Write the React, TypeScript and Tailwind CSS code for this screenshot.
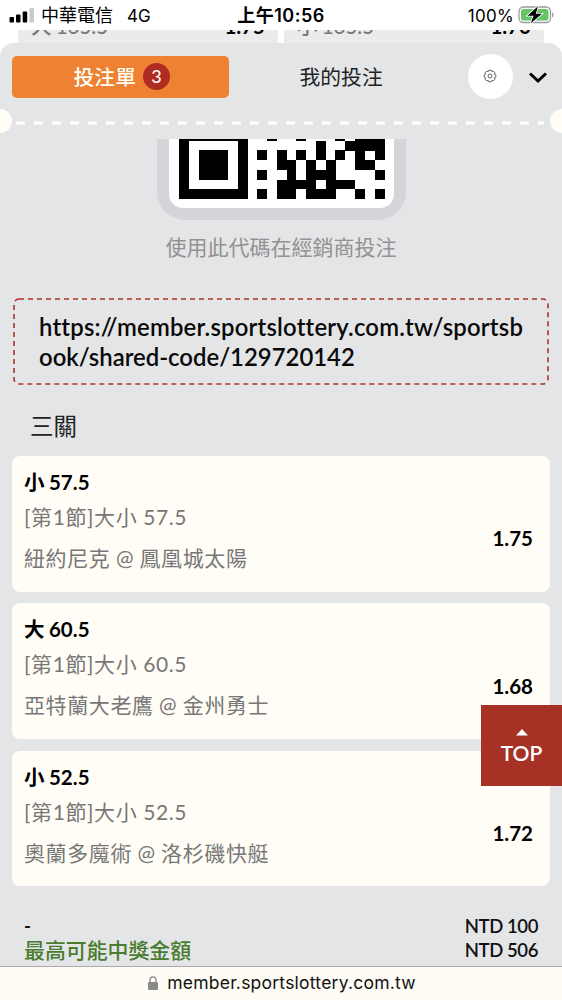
import React from 'react';

type Bet = { pick: string; market: string; game: string; odds: string };

const bets: Bet[] = [
  { pick: '小 57.5', market: '[第1節]大小 57.5', game: '紐約尼克 @ 鳳凰城太陽', odds: '1.75' },
  { pick: '大 60.5', market: '[第1節]大小 60.5', game: '亞特蘭大老鷹 @ 金州勇士', odds: '1.68' },
  { pick: '小 52.5', market: '[第1節]大小 52.5', game: '奧蘭多魔術 @ 洛杉磯快艇', odds: '1.72' },
];

const qrRows = [
  '111111100100100010111',
  '100000100000001001111',
  '101110101010101010101',
  '101110100011010100110',
  '101110101001011100001',
  '100000100011110111000',
  '111111101011011100101',
];

function QrCode() {
  return (
    <svg width="206" height="61" viewBox="0 0 206 61" shapeRendering="crispEdges" className="ml-[2px]">
      {qrRows.map((row, r) =>
        row.split('').map((c, i) =>
          c === '1' ? (
            <rect key={`${r}-${i}`} x={i * 9.78} y={r * 9.72 - 8} width="9.9" height="9.8" fill="#000" />
          ) : null
        )
      )}
    </svg>
  );
}

function StatusBar() {
  return (
    <div className="grid h-[30px] shrink-0 grid-cols-[1fr_auto_1fr] items-center bg-white pr-[7px] pl-[9px] font-['Inter','Noto_Sans_CJK_TC',sans-serif] text-[17px] leading-[28px] text-black">
      <div className="flex items-center pt-px">
        <svg width="25" height="15" viewBox="0 0 25 15" className="mb-px">
          <rect x="0.500" y="9" width="4.500" height="5.500" rx="1" />
          <rect x="7" y="6.500" width="4.500" height="8" rx="1" />
          <rect x="13.700" y="3.500" width="4.500" height="11" rx="1" />
          <rect x="20.500" y="0" width="4.500" height="14.500" rx="1" fill="#c9c9c9" />
        </svg>
        <span className="ml-[7px] text-[18px]">中華電信</span>
        <span className="ml-[14px]">4G</span>
      </div>
      <div className="-ml-[2px] pt-px text-[18px] font-semibold tracking-[0.5px]">上午10:56</div>
      <div className="flex items-center justify-end pt-px">
        <span className="mr-px tracking-[0.3px]">100%</span>
        <svg width="37" height="20" viewBox="0 0 37 20" className="ml-[3px] -mt-px">
          <rect x="1" y="2" width="31.5" height="15.5" rx="4.5" fill="#fff" stroke="#9b9b9b" strokeWidth="1.3" />
          <rect x="3" y="4" width="27.5" height="11.5" rx="2.8" fill="#64c466" />
          <path d="M34 7.5c2 .6 2 4 0 4.8z" fill="#9b9b9b" />
          <path d="M20 1.2 9.5 10.8h6l-2.7 7.5L24 8.7h-6.2z" fill="#000" stroke="#fff" strokeWidth="1.6" paintOrder="stroke" />
        </svg>
      </div>
    </div>
  );
}

function OddsCell({ label, odds }: { label: string; odds: string }) {
  return (
    <div className="flex h-[13px] w-[260px] items-start justify-between overflow-hidden bg-[#ebebeb] px-[13px] text-[20.500px]">
      <span className="-mt-[18px] leading-[28px] font-medium text-[#777] [word-spacing:-1px]">{label}</span>
      <span className="-mt-[18px] leading-[28px] font-bold text-black">{odds}</span>
    </div>
  );
}

function BetCard({ bet }: { bet: Bet }) {
  return (
    <div className="flex h-[135.5px] items-center justify-between rounded-lg bg-[#fffdf5] pr-[17px] pl-[12px]">
      <div className="flex h-full flex-col pt-[11px]">
        <div className="h-[35px] text-[20.500px] leading-[30px] font-bold text-black [word-spacing:-0.5px]">{bet.pick}</div>
        <div className="h-[41px] text-[21px] leading-[30px] tracking-[0.6px] text-[#777]">{bet.market}</div>
        <div className="text-[21px] leading-[30px] tracking-[0.6px] text-[#777] [word-spacing:-0.5px]">{bet.game}</div>
      </div>
      <div className="mt-[29px] text-[20.500px] leading-[30px] font-bold text-black">{bet.odds}</div>
    </div>
  );
}

export default function App() {
  return (
    <div className="relative flex h-[1000px] w-[562px] flex-col overflow-hidden bg-white font-['Lato','Noto_Sans_CJK_TC',sans-serif] [font-variant-ligatures:none]">
      <StatusBar />
      <div className="flex h-[13px] shrink-0 gap-[6px] pl-[18px]">
        <OddsCell label="大 165.5" odds="1.75" />
        <OddsCell label="小 165.5" odds="1.70" />
      </div>

      <div className="relative flex h-[923px] shrink-0 flex-col overflow-hidden rounded-t-[14px] bg-[#e4e5e7]">
        <div className="flex h-[67px] shrink-0 items-center pl-[12px]">
          <button className="flex h-[42px] w-[216.5px] items-center justify-center rounded-[5px] bg-[#ee8132] pl-[3px] text-[20.800px] text-[#fffdf5]">
            <span className="font-medium">投注單</span>
            <span className="ml-[7px] flex size-[27px] items-center justify-center rounded-full bg-[#b02c22] text-[18px] font-medium">3</span>
          </button>
          <span className="ml-[71px] text-[20.800px] text-[#222]">我的投注</span>
          <span className="ml-[85px] flex size-[45px] items-center justify-center rounded-full bg-white">
            <svg width="14" height="14" viewBox="0 0 14 14" fill="none" stroke="#555" strokeWidth="0.9" strokeLinejoin="round" className="-mt-px">
              <path d="M5.8 1.2h2.4l.5 1.4 1.5-.6 1.8 1.8-.6 1.5 1.4.5v2.4l-1.4.5.6 1.5-1.8 1.8-1.5-.6-.5 1.4H5.8l-.5-1.4-1.5.6L2 10.200l.6-1.500-1.400-.5V5.800l1.400-.5L2 3.800 3.800 2l1.500.6z" />
              <circle cx="7" cy="7" r="2" />
            </svg>
          </span>
          <svg width="20" height="14" viewBox="0 0 20 14" className="mt-[3px] ml-[15px]" fill="none" stroke="#000" strokeWidth="3">
            <path d="M2 2.500 10 10l8-7.500" />
          </svg>
        </div>

        <div className="flex h-[28.500px] shrink-0 items-start">
          <span className="-mt-px -ml-[12px] size-[24px] shrink-0 rounded-full bg-[#fffdf5]" />
          <svg width="538" height="4" className="mt-[11px] shrink-0">
            <line x1="4" y1="2" x2="532" y2="2" stroke="#fffdf5" strokeWidth="3.500" strokeDasharray="9 9" />
          </svg>
          <span className="-mt-px size-[24px] shrink-0 rounded-full bg-[#fffdf5]" />
        </div>

        <div className="mx-auto flex h-[81.500px] w-[249px] shrink-0 justify-center rounded-b-[28px] bg-[#d4d5d9] pb-[12px]">
          <div className="flex h-full w-[225px] justify-center rounded-b-[14px] bg-white">
            <QrCode />
          </div>
        </div>
        <div className="mt-[12px] text-center text-[21px] leading-[30px] text-[#929292]">使用此代碼在經銷商投注</div>

        <div className="mx-[13px] mt-[36px] h-[87px] shrink-0">
          <div className="relative flex h-full items-center pl-[26px]">
            <svg className="absolute inset-0" width="536" height="87" fill="none">
              <rect x="1" y="1" width="534" height="85" rx="5" stroke="#b5302b" strokeWidth="1.600" strokeDasharray="5 4" />
            </svg>
            <div className="text-[23.900px] leading-[30px] font-semibold text-[#0a0a0a]">
              <span className="tracking-[0.190px]">https://member.sportslottery.com.tw/sportsb</span>
              <br />
              ook/shared-code/129720142
            </div>
          </div>
        </div>

        <div className="mt-[24px] pl-[30px] text-[23.500px] leading-[34px] text-[#222]">三關</div>

        <div className="mt-[13px] flex shrink-0 flex-col gap-[11.750px] px-[12px]">
          {bets.map((b) => (
            <BetCard key={b.pick} bet={b} />
          ))}
        </div>

        <div className="mt-[27.500px] flex justify-between px-[24px] text-[18.500px] leading-[24px] font-bold text-[#111]">
          <div>
            <div>-</div>
            <div className="text-[20.900px] font-medium text-[#4a7c2f]">最高可能中獎金額</div>
          </div>
          <div className="text-right font-semibold tracking-[-0.400px]">
            <div>NTD 100</div>
            <div>NTD 506</div>
          </div>
        </div>
      </div>

      <div className="flex h-[34px] shrink-0 items-center justify-center border-t border-[#aaaaac] bg-[#fefcf5] pl-[2px] font-['Inter',sans-serif] text-[17.500px] tracking-[0.230px] text-[#111]">
        <svg width="10" height="14" viewBox="0 0 10 14" className="mr-[9px] mb-px">
          <rect x="0" y="6" width="10" height="8" rx="1.200" fill="#8a8a8a" />
          <path d="M2 6.500V4a3 3.200 0 0 1 6 0v2.500" fill="none" stroke="#8a8a8a" strokeWidth="1.300" />
        </svg>
        member.sportslottery.com.tw
      </div>

      <button className="absolute top-[705px] right-0 flex h-[81px] w-[81px] flex-col items-center bg-[#a63226] pt-[24px] text-[21px] leading-[26px] font-semibold text-white">
        <svg width="12" height="7" viewBox="0 0 12 7" fill="#fff" className="mb-[4px]">
          <path d="M0 6.500 6 0l6 6.500z" />
        </svg>
        TOP
      </button>
    </div>
  );
}
